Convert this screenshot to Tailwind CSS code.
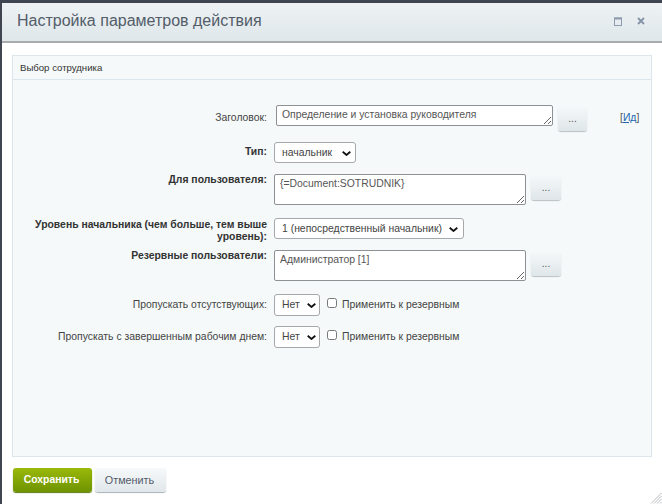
<!DOCTYPE html>
<html><head><meta charset="utf-8">
<script src="https://cdn.jsdelivr.net/npm/@tailwindcss/browser@4"></script>
</head>
<body class="w-[662px] h-[504px] overflow-hidden bg-[#3f4652] font-['Liberation_Sans',Arial,sans-serif]">
<div class="relative ml-[2px] mt-[3px] h-[501px] bg-white rounded-tl-[2px] flex flex-col">
  <div class="h-[40px] shrink-0 bg-gradient-to-b from-[#eef2f4] to-[#dfe7ea] border-b-2 border-[#a9acad] flex items-center pl-[15px] pr-[17px] justify-between">
    <span class="text-[16px] leading-[20px] text-[#535c69] -mt-[3px]">Настройка параметров действия</span>
    <div class="flex items-center gap-[15px] -mt-[2px]">
      <svg width="8" height="9" viewBox="0 0 8 9" fill="none"><rect x="0.5" y="1" width="7" height="7.5" stroke="#8f9bae"/><rect x="0" y="0.5" width="8" height="2" fill="#8f9bae"/></svg>
      <svg width="8" height="8" viewBox="0 0 8 8" fill="none"><path d="M1 1l6 6M7 1L1 7" stroke="#8593a8" stroke-width="1.8"/></svg>
    </div>
  </div>
  <div class="mx-[10px] mt-[12px] h-[402px] border border-[#dce7ed] bg-[#f5f9f9] shrink-0 text-[10.4px] leading-[12px]">
    <div class="h-[24px] border-b border-[#dce7ed] flex items-center pl-[7px] text-[#333] text-[9.6px]">Выбор сотрудника</div>
    <div class="pt-[25px]">
      <div class="flex items-start h-[37px]">
        <div class="w-[254px] text-right text-[#444] pt-[7px]">Заголовок:</div>
        <textarea class="ml-[9px] w-[277px] h-[21px] bg-white border border-[#8d9194] rounded-[2px] px-[5px] py-[2px] text-[10.4px] leading-[13px] text-[#555] outline-none resize">Определение и установка руководителя</textarea>
        <button class="ml-[5px] mt-[2px] w-[29px] h-[24px] rounded-[3px] bg-gradient-to-b from-[#f5f8f9] to-[#dfe6e9] shadow-[0_1px_1px_#b8c0c4] text-[#555] text-[10px] leading-[12px]">...</button>
        <span class="ml-[33px] mt-[7px] text-[#555]">[<a class="text-[#2067b0] underline">Ид</a>]</span>
      </div>
      <div class="flex items-start h-[32px]">
        <div class="w-[254px] text-right font-bold text-[#333] pt-[4px]">Тип:</div>
        <div class="relative ml-[7px]">
          <select class="block appearance-none w-[82px] h-[21px] bg-white border border-[#a5a9ac] rounded-[3px] pl-[7px] text-[10.4px] text-[#444]"><option>начальник</option></select>
          <svg class="absolute right-[5px] top-[9px] pointer-events-none" width="9" height="5" viewBox="0 0 9 5" fill="none"><path d="M0.7 0.7L4.5 4L8.3 0.7" stroke="#111" stroke-width="1.8"/></svg>
        </div>
      </div>
      <div class="flex items-start h-[44px]">
        <div class="w-[254px] text-right font-bold text-[#333]">Для пользователя:</div>
        <textarea class="ml-[7px] w-[252px] h-[31px] bg-white border border-[#8d9194] rounded-[2px] px-[5px] py-[2px] text-[10.4px] leading-[13px] text-[#555] outline-none resize">{=Document:SOTRUDNIK}</textarea>
        <button class="ml-[5px] mt-[2px] w-[30px] h-[24px] rounded-[3px] bg-gradient-to-b from-[#f5f8f9] to-[#dfe6e9] shadow-[0_1px_1px_#b8c0c4] text-[#555] text-[10px] leading-[12px]">...</button>
      </div>
      <div class="flex items-start h-[32px]">
        <div class="w-[254px] text-right font-bold text-[#333] pt-[1px]">Уровень начальника (чем больше, тем выше уровень):</div>
        <div class="relative ml-[7px]">
          <select class="block appearance-none w-[190px] h-[21px] bg-white border border-[#a5a9ac] rounded-[3px] pl-[7px] text-[10.4px] text-[#444]"><option>1 (непосредственный начальник)</option></select>
          <svg class="absolute right-[6px] top-[9px] pointer-events-none" width="9" height="5" viewBox="0 0 9 5" fill="none"><path d="M0.7 0.7L4.5 4L8.3 0.7" stroke="#111" stroke-width="1.8"/></svg>
        </div>
      </div>
      <div class="flex items-start h-[44px]">
        <div class="w-[254px] text-right font-bold text-[#333]">Резервные пользователи:</div>
        <textarea class="ml-[7px] w-[252px] h-[31px] bg-white border border-[#8d9194] rounded-[2px] px-[5px] py-[2px] text-[10.4px] leading-[13px] text-[#555] outline-none resize">Администратор [1]</textarea>
        <button class="ml-[5px] mt-[2px] w-[30px] h-[24px] rounded-[3px] bg-gradient-to-b from-[#f5f8f9] to-[#dfe6e9] shadow-[0_1px_1px_#b8c0c4] text-[#555] text-[10px] leading-[12px]">...</button>
      </div>
      <div class="flex items-start h-[32px]">
        <div class="w-[254px] text-right text-[#444] pt-[5px]">Пропускать отсутствующих:</div>
        <div class="relative ml-[7px]">
          <select class="block appearance-none w-[46px] h-[22px] bg-white border border-[#a5a9ac] rounded-[3px] pl-[7px] text-[10.4px] text-[#444]"><option>Нет</option></select>
          <svg class="absolute right-[4px] top-[9px] pointer-events-none" width="9" height="5" viewBox="0 0 9 5" fill="none"><path d="M0.7 0.7L4.5 4L8.3 0.7" stroke="#111" stroke-width="1.8"/></svg>
        </div>
        <input type="checkbox" class="ml-[7px] mt-[4px] w-[10px] h-[10px]">
        <span class="ml-[5px] mt-[5px] text-[#444]">Применить к резервным</span>
      </div>
      <div class="flex items-start h-[32px]">
        <div class="w-[254px] text-right text-[#444] pt-[5px]">Пропускать с завершенным рабочим днем:</div>
        <div class="relative ml-[7px]">
          <select class="block appearance-none w-[46px] h-[22px] bg-white border border-[#a5a9ac] rounded-[3px] pl-[7px] text-[10.4px] text-[#444]"><option>Нет</option></select>
          <svg class="absolute right-[4px] top-[9px] pointer-events-none" width="9" height="5" viewBox="0 0 9 5" fill="none"><path d="M0.7 0.7L4.5 4L8.3 0.7" stroke="#111" stroke-width="1.8"/></svg>
        </div>
        <input type="checkbox" class="ml-[7px] mt-[4px] w-[10px] h-[10px]">
        <span class="ml-[5px] mt-[5px] text-[#444]">Применить к резервным</span>
      </div>
    </div>
  </div>
  <div class="flex items-start pl-[11px] pt-[11px] gap-[3px]">
    <button class="w-[79px] h-[24px] pr-[2px] rounded-[3px] bg-gradient-to-b from-[#9bb90b] to-[#6d9300] shadow-[0_1px_1px_#5d7a10] text-white text-[10.4px] font-bold leading-[12px]">Сохранить</button>
    <button class="w-[71px] h-[24px] pr-[2px] rounded-[3px] bg-gradient-to-b from-[#f7f9fa] to-[#e0e7ea] shadow-[0_1px_1px_#aab3b8] text-[#535c69] text-[10.8px] leading-[12px]">Отменить</button>
  </div>
  <svg class="absolute right-0 bottom-0" width="12" height="12" viewBox="0 0 12 12" fill="none"><path d="M11.5 1L1 11.5M11.5 4L4 11.5M11.5 7L7 11.5M11.5 10L10 11.5" stroke="#b9bcbe"/></svg>
</div>
</body></html>
